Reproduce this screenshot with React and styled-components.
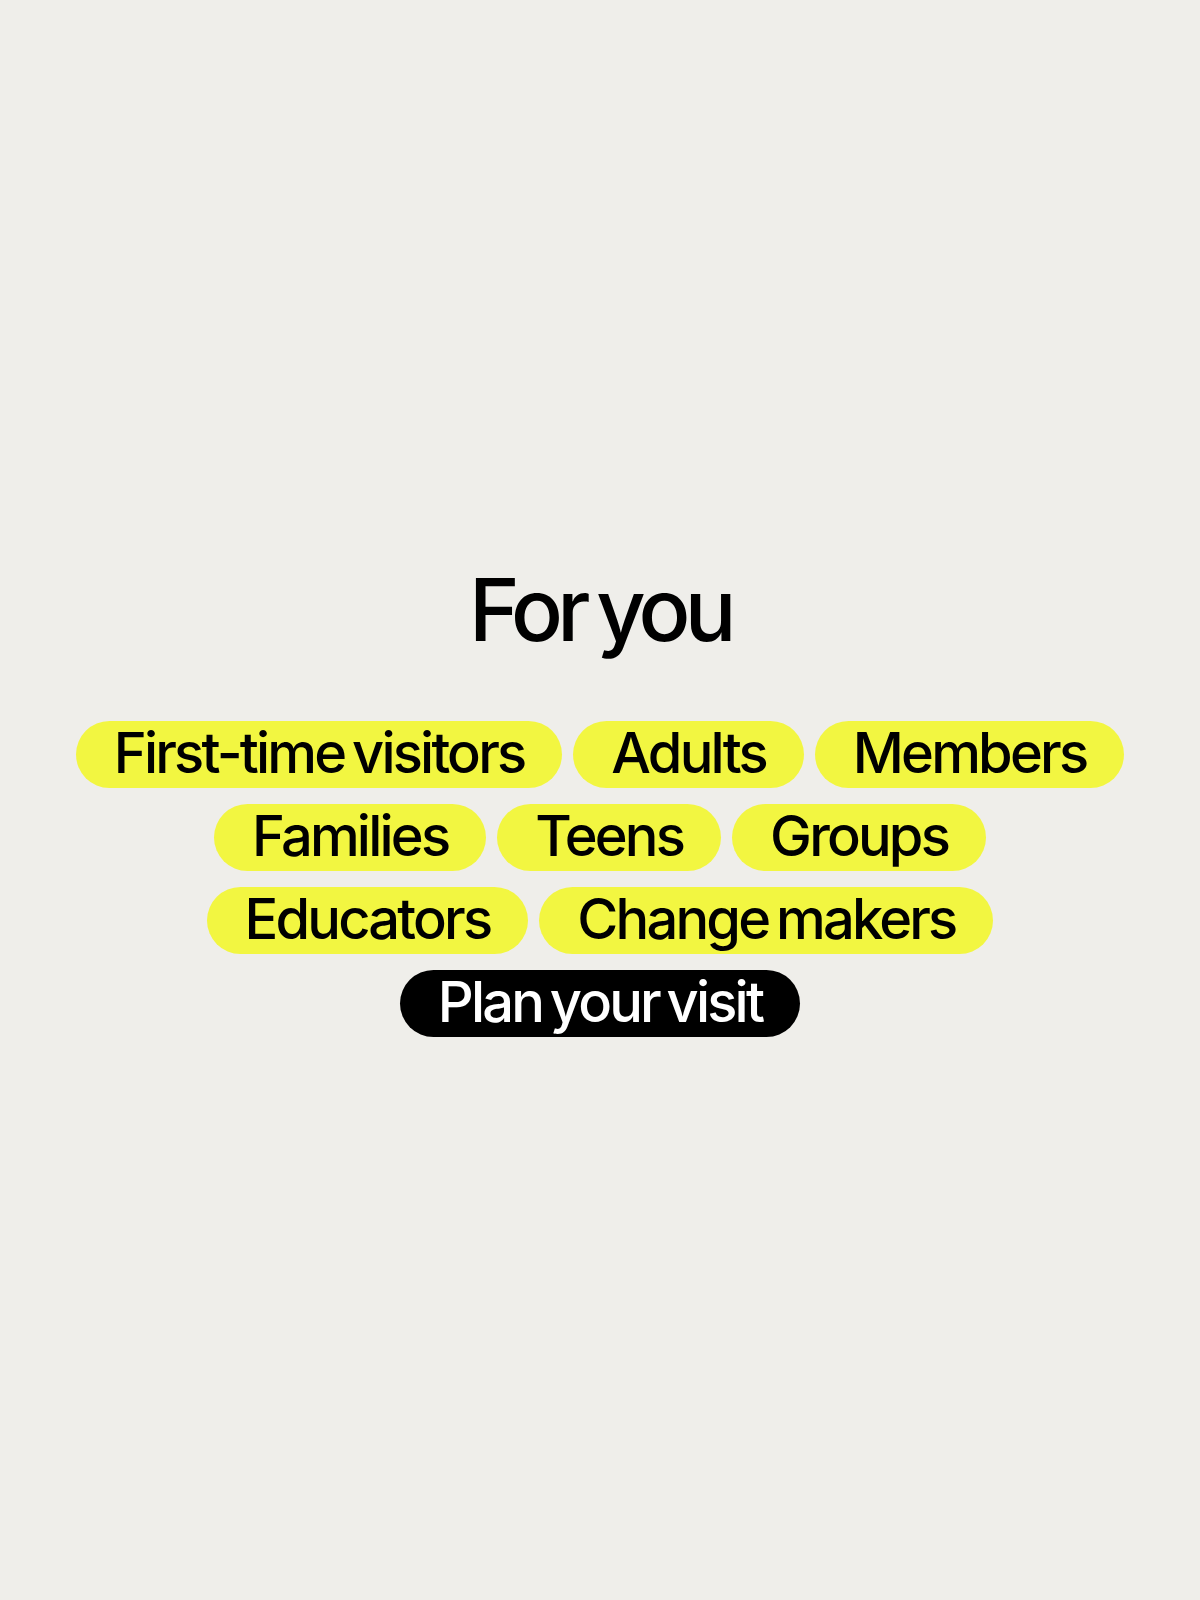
import React from "react";
import styled, { createGlobalStyle } from "styled-components";

const Global = createGlobalStyle`
  html, body { margin: 0; padding: 0; background: #efeeea; }
  body { font-family: Inter, "Liberation Sans", Arial, sans-serif; -webkit-font-smoothing: antialiased; }
`;

const Page = styled.main`
  min-height: 100vh;
  display: flex;
  flex-direction: column;
  align-items: center;
  justify-content: center;
  box-sizing: border-box;
`;

const Title = styled.h2`
  margin: 0 0 64px;
  font-size: 86px;
  font-weight: 500;
  line-height: 1.1;
  letter-spacing: -0.065em;
  word-spacing: -0.07em;
  color: #000;
`;

const TagList = styled.ul`
  list-style: none;
  margin: 0;
  padding: 0;
  width: 1080px;
  display: flex;
  flex-wrap: wrap;
  justify-content: center;
  column-gap: 11px;
  row-gap: 16px;
`;

const Tag = styled.li`
  display: flex;
  align-items: center;
  justify-content: center;
  height: 67px;
  padding: 0 38px 3px;
  border-radius: 34px;
  box-sizing: border-box;
  background: ${(p) => (p.$dark ? "#000" : "#f2f641")};
  color: ${(p) => (p.$dark ? "#fff" : "#000")};
  font-size: 56px;
  font-weight: 500;
  letter-spacing: -0.05em;
  word-spacing: -0.08em;
  white-space: nowrap;
`;

const tags = [
  "First-time visitors",
  "Adults",
  "Members",
  "Families",
  "Teens",
  "Groups",
  "Educators",
  "Change makers",
];

export default function App() {
  return (
    <>
      <Global />
      <Page>
        <Title>For you</Title>
        <TagList>
          {tags.map((t) => (
            <Tag key={t}>{t}</Tag>
          ))}
          <Tag $dark>Plan your visit</Tag>
        </TagList>
      </Page>
    </>
  );
}
